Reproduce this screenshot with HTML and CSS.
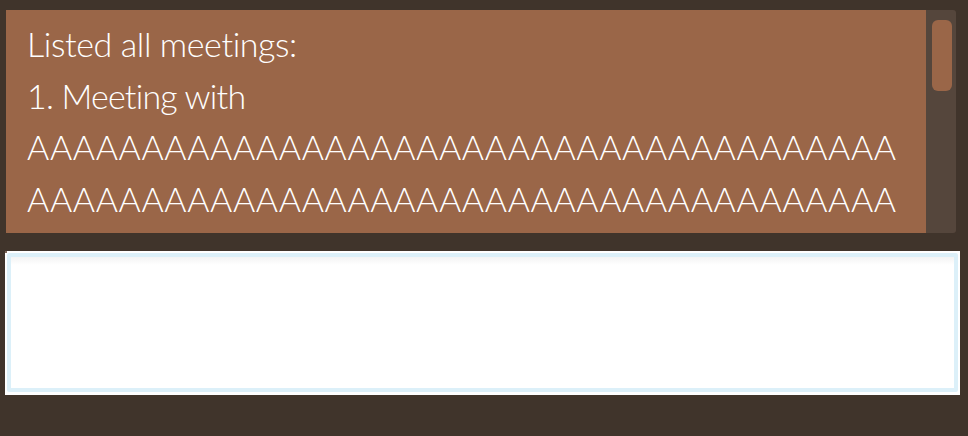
FILE: index.html
```html
<!DOCTYPE html>
<html lang="en">
<head>
<meta charset="utf-8">
<title>Meetings</title>
<link rel="stylesheet" href="styles.css">
</head>
<body>
<div class="app">
  <div class="result">
    <div class="result-text">
      <div class="line line-head">Listed all meetings:</div>
      <div class="line line-item">1. Meeting with</div>
      <div class="line line-name">AAAAAAAAAAAAAAAAAAAAAAAAAAAAAAAAAAAAAA</div>
      <div class="line line-name">AAAAAAAAAAAAAAAAAAAAAAAAAAAAAAAAAAAAAA</div>
    </div>
    <div class="scroll-track"><div class="scroll-thumb"></div></div>
  </div>
  <div class="field">
    <div class="field-inner"></div>
  </div>
</div>
</body>
</html>
```
FILE: styles.css
```css
html, body {
  margin: 0;
  padding: 0;
}
body {
  background: #40342b;
  width: 968px;
  height: 436px;
  overflow: hidden;
}
.app {
  display: flex;
  flex-direction: column;
  padding: 10px 12px 0 6px;
}
.result {
  display: flex;
  height: 223px;
}
.result-text {
  flex: 1;
  background: #9a6648;
  padding: 8px 0 0 21px;
  overflow: hidden;
  color: #ffffff;
  font-family: "Lato", "Open Sans", sans-serif;
  font-weight: 300;
  font-size: 34px;
  line-height: 51.7px;
  white-space: nowrap;
}
.line-head {
  letter-spacing: -0.4px;
}
.line-item {
  letter-spacing: -0.8px;
}
.line-name {
  letter-spacing: 0.6px;
}
.scroll-track {
  width: 30px;
  box-sizing: border-box;
  background: #55463c;
  border-radius: 0 3px 3px 0;
  padding: 10px 4px 0 6px;
}
.scroll-thumb {
  width: 20px;
  height: 71px;
  border-radius: 6px;
  background: #9a6648;
}
.field {
  margin: 18px -4px 0 -1px;
  height: 144px;
  box-sizing: border-box;
  padding: 2px 2px 3px 2px;
  background-color: #ffffff;
  background-image:
    linear-gradient(#7d675a, #7d675a),
    linear-gradient(#7d675a, #7d675a),
    linear-gradient(#7d675a, #7d675a),
    linear-gradient(#7d675a, #7d675a);
  background-size: 2px 2px;
  background-repeat: no-repeat;
  background-position: 2px 2px, right 2px top 2px, 2px bottom 3px, right 2px bottom 3px;
  display: flex;
}
.field-inner {
  flex: 1;
  border: 4px solid #dcf0f9;
  border-radius: 2px;
  background: linear-gradient(#f4f4f4 0, #ffffff 8px);
}
```
